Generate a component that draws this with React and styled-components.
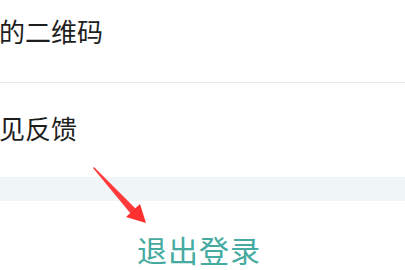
import React from "react";
import styled, { createGlobalStyle } from "styled-components";

const GlobalStyle = createGlobalStyle`
  html, body {
    margin: 0;
    padding: 0;
    background: #ffffff;
    overflow: hidden;
  }
  body {
    font-family: "Noto Sans CJK SC", "Noto Sans", sans-serif;
  }
`;

const Page = styled.div`
  position: relative;
  width: 405px;
  height: 270px;
  overflow: hidden;
  display: flex;
  flex-direction: column;
  background: #ffffff;
`;

const MenuRow = styled.div`
  box-sizing: border-box;
  height: ${(p) => p.$height}px;
  margin-top: ${(p) => p.$offset || 0}px;
  display: flex;
  align-items: center;
  padding-bottom: 5px;
  margin-left: -1px;
  border-bottom: ${(p) => (p.$divider ? "1px solid #e9e9e9" : "none")};
  flex-shrink: 0;
`;

const MenuLabel = styled.span`
  font-size: 26px;
  line-height: 1;
  color: #1e1e1e;
  white-space: nowrap;
`;

const GapBand = styled.div`
  height: 24px;
  background: #f0f5f8;
  flex-shrink: 0;
`;

const LogoutArea = styled.div`
  flex: 1;
  display: flex;
  justify-content: center;
  padding-top: 33px;
  padding-right: 7px;
`;

const LogoutText = styled.span`
  font-size: 30px;
  line-height: 1;
  color: #45aaa0;
  letter-spacing: 1px;
`;

const Annotation = styled.svg`
  position: absolute;
  left: 0;
  top: 0;
  pointer-events: none;
`;

export default function App() {
  return (
    <>
      <GlobalStyle />
      <Page>
        <MenuRow $height={98} $offset={-15} $divider>
          <MenuLabel>的二维码</MenuLabel>
        </MenuRow>
        <MenuRow $height={94}>
          <MenuLabel>见反馈</MenuLabel>
        </MenuRow>
        <GapBand />
        <LogoutArea>
          <LogoutText>退出登录</LogoutText>
        </LogoutArea>
        <Annotation width="405" height="270" viewBox="0 0 405 270">
          <polygon points="93,168 94,167 137,210 131,214" fill="#ff3a3a" />
          <polygon points="146,223 126,217 140,204" fill="#ff3030" />
        </Annotation>
      </Page>
    </>
  );
}
